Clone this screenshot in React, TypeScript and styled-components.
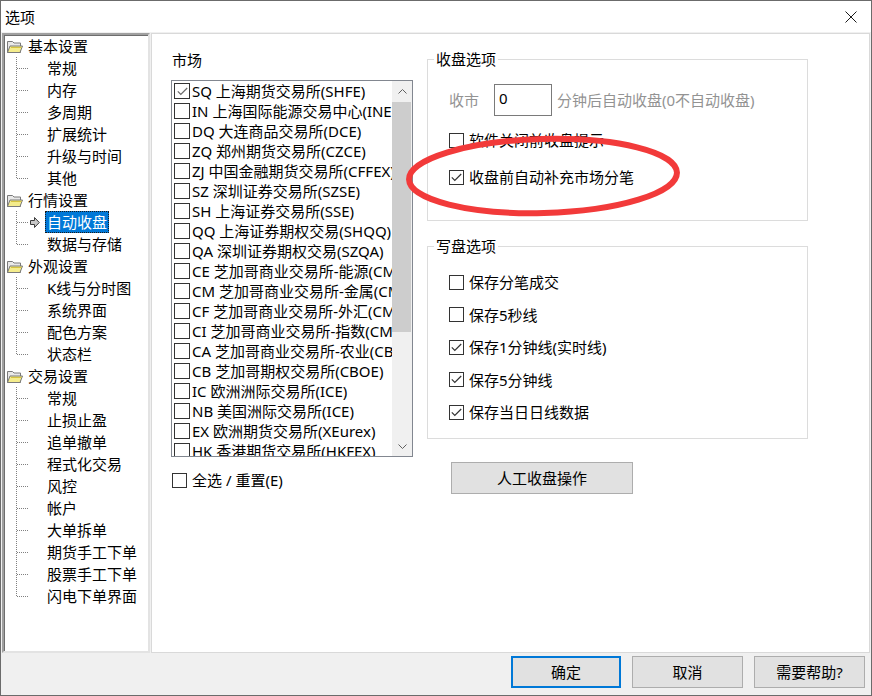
import { FC } from "react";
import styled, { createGlobalStyle } from "styled-components";

const GlobalStyle = createGlobalStyle`
  html, body {
    margin: 0;
    padding: 0;
    background: #ffffff;
  }
  body {
    font-family: "Noto Sans", "Noto Sans CJK SC", sans-serif;
    font-size: 15px;
    color: #000;
  }
  * {
    box-sizing: border-box;
  }
`;

const tree = [
  { label: "基本设置", children: ["常规", "内存", "多周期", "扩展统计", "升级与时间", "其他"] },
  { label: "行情设置", children: ["自动收盘", "数据与存储"] },
  { label: "外观设置", children: ["K线与分时图", "系统界面", "配色方案", "状态栏"] },
  {
    label: "交易设置",
    children: [
      "常规",
      "止损止盈",
      "追单撤单",
      "程式化交易",
      "风控",
      "帐户",
      "大单拆单",
      "期货手工下单",
      "股票手工下单",
      "闪电下单界面",
    ],
  },
];

const markets = [
  "SQ 上海期货交易所(SHFE)",
  "IN 上海国际能源交易中心(INE)",
  "DQ 大连商品交易所(DCE)",
  "ZQ 郑州期货交易所(CZCE)",
  "ZJ 中国金融期货交易所(CFFEX)",
  "SZ 深圳证券交易所(SZSE)",
  "SH 上海证券交易所(SSE)",
  "QQ 上海证券期权交易(SHQQ)",
  "QA 深圳证券期权交易(SZQA)",
  "CE 芝加哥商业交易所-能源(CME)",
  "CM 芝加哥商业交易所-金属(CME)",
  "CF 芝加哥商业交易所-外汇(CME)",
  "CI 芝加哥商业交易所-指数(CME)",
  "CA 芝加哥商业交易所-农业(CBOT)",
  "CB 芝加哥期权交易所(CBOE)",
  "IC 欧洲洲际交易所(ICE)",
  "NB 美国洲际交易所(ICE)",
  "EX 欧洲期货交易所(XEurex)",
  "HK 香港期货交易所(HKFEX)",
];

const writeOptions = [
  { label: "保存分笔成交", checked: false },
  { label: "保存5秒线", checked: false },
  { label: "保存1分钟线(实时线)", checked: true },
  { label: "保存5分钟线", checked: true },
  { label: "保存当日日线数据", checked: true },
];

const Window = styled.div`
  position: relative;
  width: 872px;
  height: 696px;
  border: 1px solid #6b6b6b;
  background: #f0f0f0;
  display: flex;
  flex-direction: column;
`;

const TitleBar = styled.div`
  height: 31px;
  flex: none;
  background: #fff;
  display: flex;
  align-items: center;
  justify-content: space-between;
  padding: 0 14px 0 4px;
  line-height: 20px;
`;

const Body = styled.div`
  height: 622px;
  flex: none;
  display: flex;
  gap: 1px;
  padding: 1px 1px 1px 1px;
`;

const TreePanel = styled.div`
  width: 148px;
  flex: none;
  background: #fff;
  border: 2px solid;
  border-color: #a0a0a0 #e3e3e3 #e3e3e3 #a0a0a0;
  box-shadow: inset 1px 1px 0 #6e6e6e;
  overflow: hidden;
`;

const TreeRow = styled.div`
  height: 22px;
  display: flex;
  align-items: center;
  white-space: nowrap;
  line-height: 20px;
`;

const RootRow = styled(TreeRow)`
  padding-left: 3px;
  gap: 5px;
`;

const IconSlot = styled.span`
  width: 15px;
  height: 22px;
  flex: none;
  display: flex;
  align-items: center;
  justify-content: flex-start;
`;

const NodeLabel = styled.span<{ $selected?: boolean }>`
  height: 22px;
  display: flex;
  align-items: center;
  padding: 0 1px;
  border: 1px ${(p) => (p.$selected ? "dotted #1a1a1a" : "solid transparent")};
  background: ${(p) => (p.$selected ? "#0078d7" : "transparent")};
  color: ${(p) => (p.$selected ? "#fff" : "#000")};
`;

const MainPanel = styled.div`
  flex: 1;
  background: #fff;
  border: 1px solid #d9d9d9;
  display: grid;
  grid-template-columns: 242px 381px;
  column-gap: 14px;
  align-items: start;
  padding: 15px 0 0 19px;
`;

const MarketColumn = styled.div`
  margin-top: 1px;
  display: flex;
  flex-direction: column;
`;

const Label = styled.div`
  line-height: 20px;
  padding-left: 1px;
`;

const ListBox = styled.div`
  margin-top: 10px;
  height: 377px;
  border: 1px solid #828790;
  display: flex;
  background: #fff;
`;

const ListItems = styled.div`
  flex: 1;
  min-width: 0;
  overflow: hidden;
`;

const ListRow = styled.div`
  height: 20px;
  display: flex;
  align-items: center;
  gap: 2px;
  padding-left: 2px;
  white-space: nowrap;
  line-height: 20px;
`;

const ScrollBar = styled.div`
  width: 20px;
  flex: none;
  background: #f0f0f0;
  display: flex;
  flex-direction: column;
`;

const ScrollArrow = styled.div`
  height: 20px;
  flex: none;
  display: flex;
  align-items: center;
  justify-content: center;
`;

const ScrollTrack = styled.div`
  flex: 1;
`;

const Thumb = styled.div`
  margin: 1px 1px 0 0;
  height: 230px;
  background: #cdcdcd;
`;

const CheckRow = styled.div<{ $muted?: boolean }>`
  height: 20px;
  display: flex;
  align-items: center;
  gap: 5px;
  line-height: 20px;
  white-space: nowrap;
  color: ${(p) => (p.$muted ? "#939393" : "#000")};
`;

const SelectAllRow = styled(CheckRow)`
  margin-top: 13px;
  padding-left: 1px;
`;

const Box = styled.span<{ $size: number }>`
  width: ${(p) => p.$size}px;
  height: ${(p) => p.$size}px;
  flex: none;
  border: 1px solid #333;
  background: #fff;
  display: inline-flex;
  align-items: center;
  justify-content: center;
`;

const OptionsColumn = styled.div`
  display: flex;
  flex-direction: column;
`;

const Group = styled.fieldset<{ $gapTop?: number }>`
  margin: ${(p) => p.$gapTop ?? 0}px 0 0 0;
  padding: 0;
  min-width: 0;
  border: 1px solid #dcdcdc;
`;

const Legend = styled.legend`
  margin-left: 6px;
  padding: 0 2px;
  line-height: 20px;
`;

const GroupBody = styled.div<{ $top: number; $bottom: number; $gap?: number }>`
  display: flex;
  flex-direction: column;
  padding: ${(p) => p.$top}px 0 ${(p) => p.$bottom}px 21px;
  gap: ${(p) => p.$gap ?? 0}px;
`;

const CloseRow = styled.div`
  height: 32px;
  display: flex;
  align-items: center;
  color: #939393;
  line-height: 20px;
  white-space: nowrap;
`;

const NumberInput = styled.div`
  width: 58px;
  height: 32px;
  margin: 0 5px 0 15px;
  border: 1px solid #7a7a7a;
  background: #fff;
  color: #000;
  padding: 3px 0 0 4px;
  line-height: 20px;
`;

const Spaced = styled(CheckRow)<{ $mt: number }>`
  margin-top: ${(p) => p.$mt}px;
`;

const PushButton = styled.div<{ $primary?: boolean }>`
  width: ${(p) => (p.$primary ? 110 : 111)}px;
  height: 32px;
  flex: none;
  display: flex;
  align-items: center;
  justify-content: center;
  background: #e1e1e1;
  border: ${(p) => (p.$primary ? "2px solid #0078d7" : "1px solid #adadad")};
  line-height: 20px;
`;

const ManualButton = styled(PushButton)`
  width: 182px;
  margin: 23px 0 0 24px;
`;

const Footer = styled.div`
  flex: 1;
  display: flex;
  justify-content: flex-end;
  gap: 11px;
  padding: 2px 6px 0 0;
`;

const Annotation = styled.svg`
  position: absolute;
  left: 400px;
  top: 128px;
  pointer-events: none;
`;

const Check: FC<{ color?: string }> = ({ color = "#333" }) => (
  <svg width="11" height="9" viewBox="0 0 11 9">
    <polyline points="0.8,4.4 3.8,7.4 10.2,1" fill="none" stroke={color} strokeWidth="1.2" />
  </svg>
);

const CheckBox: FC<{ checked?: boolean; size?: number; color?: string }> = ({
  checked,
  size = 15,
  color,
}) => <Box $size={size}>{checked && <Check color={color} />}</Box>;

const Folder = () => (
  <svg width="16" height="13" viewBox="0 0 16 13">
    <path d="M0.5 1.5 h5 l1.5 1.5 h6.5 v9.5 h-13 z" fill="#e8e8e8" stroke="#7a7a7a" />
    <path d="M0.5 12.5 l2.5 -6.5 h12.5 l-2.5 6.5 z" fill="#f4ec8c" stroke="#7a7a7a" />
    <path d="M4 7.5 h10.5" stroke="#d6c440" />
  </svg>
);

const Arrow = () => (
  <svg width="10" height="11" viewBox="0 0 10 11">
    <path d="M0.5 3.5 h4 v-3 l4.8 5 l-4.8 5 v-3 h-4 z" fill="#c8c8c8" stroke="#3c3c3c" />
  </svg>
);

const Connector: FC<{ last: boolean }> = ({ last }) => (
  <svg width="26" height="22" viewBox="0 0 26 22">
    <line x1="12.5" y1="0" x2="12.5" y2={last ? 11 : 22} stroke="#808080" strokeDasharray="1 1" />
    <line x1="13" y1="11.5" x2="24" y2="11.5" stroke="#808080" strokeDasharray="1 1" />
  </svg>
);

const Chevron: FC<{ down?: boolean }> = ({ down }) => (
  <svg width="9" height="5" viewBox="0 0 9 5">
    <polyline
      points={down ? "0.5,0.5 4.5,4.5 8.5,0.5" : "0.5,4.5 4.5,0.5 8.5,4.5"}
      fill="none"
      stroke="#606060"
    />
  </svg>
);

const Tree = () => (
  <TreePanel>
    {tree.map((group) => (
      <div key={group.label}>
        <RootRow>
          <Folder />
          <span>{group.label}</span>
        </RootRow>
        {group.children.map((child, i) => {
          const selected = child === "自动收盘";
          return (
            <TreeRow key={group.label + child}>
              <Connector last={i === group.children.length - 1} />
              <IconSlot>{selected && <Arrow />}</IconSlot>
              <NodeLabel $selected={selected}>{child}</NodeLabel>
            </TreeRow>
          );
        })}
      </div>
    ))}
  </TreePanel>
);

const App = () => {
  return (
    <>
      <GlobalStyle />
      <Window>
        <TitleBar>
          <span>选项</span>
          <svg width="12" height="12" viewBox="0 0 12 12">
            <path d="M0.5 0.5 L11.5 11.5 M11.5 0.5 L0.5 11.5" stroke="#1a1a1a" strokeWidth="1" />
          </svg>
        </TitleBar>
        <Body>
          <Tree />
          <MainPanel>
            <MarketColumn>
              <Label>市场</Label>
              <ListBox>
                <ListItems>
                  {markets.map((m, i) => (
                    <ListRow key={m}>
                      <CheckBox size={16} checked={i === 0} color="#6a6a6a" />
                      <span>{m}</span>
                    </ListRow>
                  ))}
                </ListItems>
                <ScrollBar>
                  <ScrollArrow>
                    <Chevron />
                  </ScrollArrow>
                  <ScrollTrack>
                    <Thumb />
                  </ScrollTrack>
                  <ScrollArrow>
                    <Chevron down />
                  </ScrollArrow>
                </ScrollBar>
              </ListBox>
              <SelectAllRow>
                <CheckBox />
                <span>全选 / 重置(E)</span>
              </SelectAllRow>
            </MarketColumn>
            <OptionsColumn>
              <Group>
                <Legend>收盘选项</Legend>
                <GroupBody $top={15} $bottom={33}>
                  <CloseRow>
                    <span>收市</span>
                    <NumberInput>0</NumberInput>
                    <span>分钟后自动收盘(0不自动收盘)</span>
                  </CloseRow>
                  <Spaced $mt={14}>
                    <CheckBox />
                    <span>软件关闭前收盘提示</span>
                  </Spaced>
                  <Spaced $mt={17}>
                    <CheckBox checked />
                    <span>收盘前自动补充市场分笔</span>
                  </Spaced>
                </GroupBody>
              </Group>
              <Group $gapTop={15}>
                <Legend>写盘选项</Legend>
                <GroupBody $top={16} $bottom={16} $gap={12.5}>
                  {writeOptions.map((o) => (
                    <CheckRow key={o.label}>
                      <CheckBox checked={o.checked} />
                      <span>{o.label}</span>
                    </CheckRow>
                  ))}
                </GroupBody>
              </Group>
              <ManualButton>人工收盘操作</ManualButton>
            </OptionsColumn>
          </MainPanel>
        </Body>
        <Footer>
          <PushButton $primary>确定</PushButton>
          <PushButton>取消</PushButton>
          <PushButton>需要帮助?</PushButton>
        </Footer>
        <Annotation width="290" height="94" viewBox="0 0 290 94">
          <ellipse
            cx="142"
            cy="47"
            rx="134"
            ry="37"
            transform="rotate(-1.5 142 47)"
            fill="none"
            stroke="#f23a3a"
            strokeWidth="6"
          />
        </Annotation>
      </Window>
    </>
  );
};

export default App;
